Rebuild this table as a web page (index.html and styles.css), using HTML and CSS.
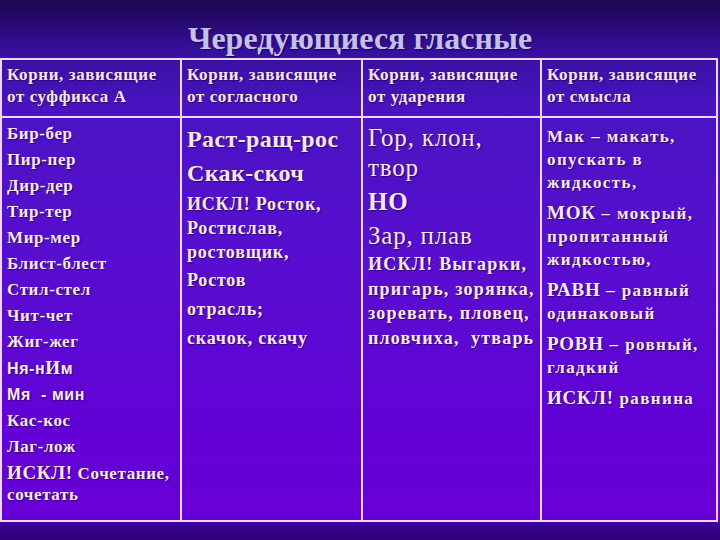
FILE: index.html
```html
<!DOCTYPE html>
<html lang="ru">
<head>
<meta charset="utf-8">
<title>Чередующиеся гласные</title>
<link rel="stylesheet" href="styles.css">
</head>
<body>
<div class="slide">
  <h1 class="title">Чередующиеся гласные</h1>
  <table class="grid">
    <colgroup>
      <col class="c1"><col class="c2"><col class="c3"><col class="c4">
    </colgroup>
    <thead>
      <tr>
        <th>Корни, зависящие<br>от суффикса А</th>
        <th>Корни, зависящие<br>от согласного</th>
        <th>Корни, зависящие<br>от ударения</th>
        <th>Корни, зависящие<br>от смысла</th>
      </tr>
    </thead>
    <tbody>
      <tr>
        <td class="col-a">
          <p>Бир-бер</p>
          <p>Пир-пер</p>
          <p>Дир-дер</p>
          <p>Тир-тер</p>
          <p>Мир-мер</p>
          <p>Блист-блест</p>
          <p>Стил-стел</p>
          <p>Чит-чет</p>
          <p>Жиг-жег</p>
          <p class="sans">Ня-н<span class="serif-cap">И</span>м</p>
          <p class="sans">Мя&nbsp; - мин</p>
          <p>Кас-кос</p>
          <p>Лаг-лож</p>
          <p class="wrap"><span class="caps">ИСКЛ!</span> Сочетание,<br>сочетать</p>
        </td>
        <td class="col-b">
          <p class="big">Раст-ращ-рос</p>
          <p class="big">Скак-скоч</p>
          <p class="small tight">ИСКЛ! Росток,<br>Ростислав,<br>ростовщик,</p>
          <p class="small">Ростов</p>
          <p class="small">отрасль;</p>
          <p class="small">скачок, скачу</p>
        </td>
        <td class="col-c">
          <p class="large first">Гор, клон,<br>твор</p>
          <p class="large heavy">НО</p>
          <p class="large">Зар, плав</p>
          <p class="small excl">ИСКЛ! Выгарки,<br>пригарь, зорянка,<br>зоревать, пловец,<br>пловчиха,&nbsp; утварь</p>
        </td>
        <td class="col-d">
          <p>Мак – макать,<br>опускать в<br>жидкость,</p>
          <p><span class="caps">МОК</span> – мокрый,<br>пропитанный<br>жидкостью,</p>
          <p><span class="caps">РАВН</span> – равный<br>одинаковый</p>
          <p><span class="caps">РОВН</span> – ровный,<br>гладкий</p>
          <p><span class="caps">ИСКЛ!</span> равнина</p>
        </td>
      </tr>
    </tbody>
  </table>
</div>
</body>
</html>
```

FILE: styles.css
```css
html, body {
  margin: 0;
  padding: 0;
}

body {
  width: 720px;
  height: 540px;
  overflow: hidden;
  background: linear-gradient(to bottom,
    #1c0750 0px,
    #280a74 25px,
    #3810a2 55px,
    #4a14c2 110px,
    #580ed0 260px,
    #6202d6 420px,
    #6800d6 520px,
    #3e009a 523px,
    #2c0076 540px);
  font-family: "Liberation Serif", "Times New Roman", serif;
  color: #f8e6f4;
}

.slide {
  position: relative;
  width: 720px;
  height: 540px;
}

.title {
  margin: 0;
  padding-top: 19px;
  height: 39px;
  line-height: 39px;
  font-size: 32px;
  font-weight: bold;
  text-align: center;
  color: #c4c0ee;
  text-shadow: 1px 1px 1px #1a0650;
  letter-spacing: 0;
}

.grid {
  border-collapse: collapse;
  width: 716px;
  table-layout: fixed;
  margin: 0;
}

.c1 { width: 180px; }
.c2 { width: 181px; }
.c3 { width: 179px; }
.c4 { width: 176px; }

.grid th,
.grid td {
  border: 2px solid #f2d6f0;
  text-align: left;
  vertical-align: top;
  font-weight: bold;
  text-shadow: 1px 1px 1px #2a0860;
  letter-spacing: 0.6px;
}

.grid th {
  height: 52px;
  padding: 4px 2px 0 5px;
  font-size: 17px;
  line-height: 22px;
}

.grid td {
  height: 402px;
  padding: 0 2px 0 5px;
  font-size: 17px;
}

.grid p {
  margin: 0;
  white-space: nowrap;
}

/* column 1 */
.col-a p {
  margin-top: 5px;
  line-height: 21px;
}
.col-a .sans {
  font-family: "Liberation Sans", Arial, sans-serif;
  font-size: 16px;
  letter-spacing: 0.6px;
}
.col-a .serif-cap {
  font-family: "Liberation Serif", serif;
  font-size: 19px;
}
.caps {
  font-size: 19px;
}

/* column 2 */
.col-b .big {
  font-size: 24px;
  line-height: 30px;
  margin-top: 4px;
  letter-spacing: 0.4px;
}
.col-b .big:first-child {
  margin-top: 6px;
}
.col-b .small {
  font-size: 18px;
  line-height: 26px;
  margin-top: 3px;
  letter-spacing: 0.8px;
}
.col-b .tight {
  line-height: 24px;
  margin-top: 4px;
}

/* column 3 */
.col-c .large {
  font-size: 25px;
  line-height: 30px;
  font-weight: normal;
  margin-top: 4px;
  letter-spacing: 0.8px;
}
.col-c .first {
  margin-top: 5px;
}
.col-c .heavy {
  font-weight: bold;
}
.col-c .excl {
  font-size: 18px;
  line-height: 24.5px;
  margin-top: 1px;
  letter-spacing: 1.2px;
}

/* column 4 */
.col-d p {
  margin-top: 7px;
  line-height: 23px;
  letter-spacing: 1.4px;
}
.col-d .caps {
  letter-spacing: 0.8px;
}
```
